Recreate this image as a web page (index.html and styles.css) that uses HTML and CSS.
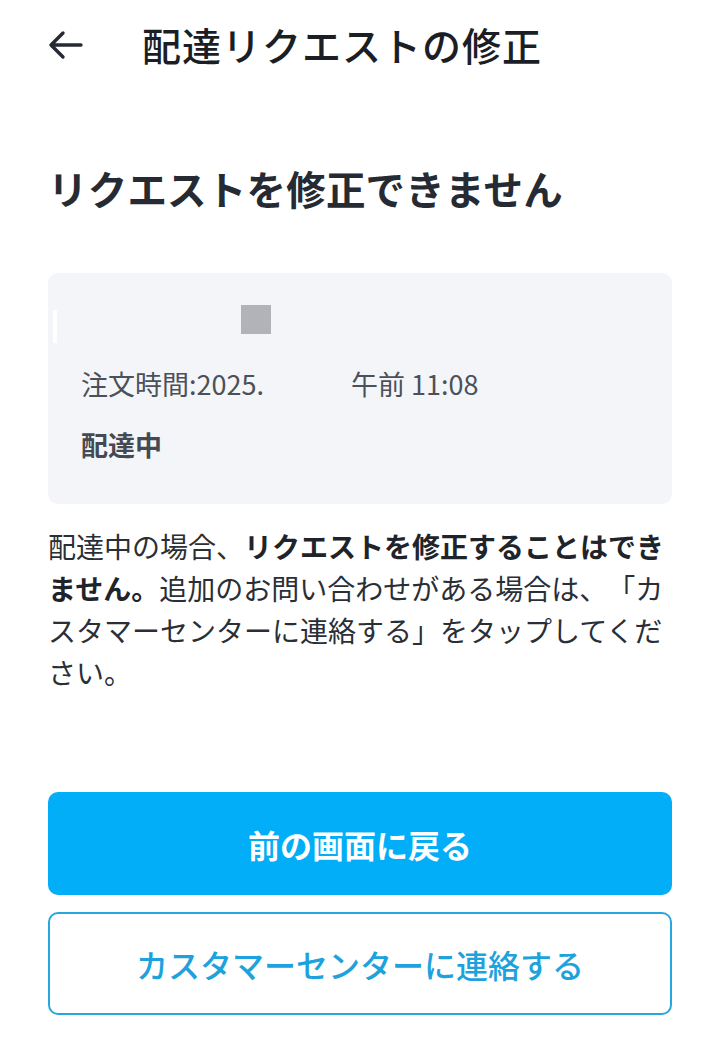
FILE: index.html
```html
<!DOCTYPE html>
<html lang="ja">

<head>
  <meta charset="UTF-8">
  <meta name="viewport" content="width=device-width, initial-scale=1.0">
  <title>配達リクエストの修正</title>
  <link rel="stylesheet" href="styles.css">
</head>

<body>
  <div id="page">
    <div class="top-bar">
      <div class="back">
        <svg width="36" height="30" viewBox="0 0 36 30">
          <path d="M4 15 H33 M15 3 L3 15 L15 27" fill="none" stroke="#262b33" stroke-width="3.4"
            stroke-linecap="round" stroke-linejoin="round" />
        </svg>
      </div>
      <h1 class="top-title">配達リクエストの修正</h1>
    </div>

    <h2 class="heading">リクエストを修正できません</h2>

    <div class="order-card">
      <div class="shop-row">
        <span class="blur-line"></span>
        <span class="thumb"></span>
      </div>
      <p class="order-time">注文時間:2025.<span class="hidden-date"></span>午前 11:08</p>
      <p class="order-status">配達中</p>
    </div>

    <p class="notice">配達中の場合、<b>リクエストを修正することはできません。</b>追加のお問い合わせがある場合は、「カスタマーセンターに連絡する」をタップしてください。</p>

    <div class="actions">
      <div class="btn btn-primary">前の画面に戻る</div>
      <div class="btn btn-outline">カスタマーセンターに連絡する</div>
    </div>
  </div>
</body>

</html>
```

FILE: styles.css
```css
* {
  margin: 0;
  padding: 0;
  box-sizing: border-box;
}

body {
  background: #ffffff;
  font-family: "Noto Sans CJK JP", "Noto Sans", sans-serif;
  color: #262b33;
}

#page {
  width: 720px;
  height: 1056px;
  padding: 0 48px;
}

.top-bar {
  display: flex;
  align-items: center;
  height: 88px;
}

.back {
  width: 94px;
  display: flex;
  align-items: center;
  padding-top: 2px;
}

.top-title {
  font-size: 39px;
  font-weight: 500;
  color: #1b1f25;
  letter-spacing: 1px;
}

.heading {
  margin-top: 74px;
  font-size: 39.5px;
  font-weight: 700;
  line-height: 1.3;
  color: #262b33;
  letter-spacing: 0.2px;
}

.order-card {
  margin-top: 60px;
  background: #f3f5f8;
  border-radius: 10px;
  padding: 32px 33px 42px 33px;
}

.shop-row {
  position: relative;
  height: 38px;
}

.blur-line {
  position: absolute;
  left: -28px;
  top: 5px;
  width: 4px;
  height: 33px;
  background: #ffffff;
}

.thumb {
  position: absolute;
  left: 160px;
  top: 0;
  width: 30px;
  height: 29px;
  background: #b1b3b8;
}

.order-time {
  margin-top: 24px;
  font-size: 27px;
  line-height: 34px;
  color: #4b5059;
}

.hidden-date {
  display: inline-block;
  width: 87px;
}

.order-status {
  margin-top: 27px;
  font-size: 27px;
  line-height: 34px;
  font-weight: 700;
  color: #454a52;
}

.notice {
  margin-top: 21px;
  font-size: 28px;
  line-height: 42px;
  color: #2a2f36;
  text-spacing-trim: space-all;
}

.notice b {
  font-weight: 700;
  color: #1f242b;
}

.actions {
  margin-top: 99px;
  display: flex;
  flex-direction: column;
  gap: 17px;
}

.btn {
  height: 103px;
  border-radius: 10px;
  display: flex;
  align-items: center;
  justify-content: center;
  font-size: 32px;
  font-weight: 700;
}

.btn-primary {
  background: #03aef8;
  color: #ffffff;
}

.btn-outline {
  background: #ffffff;
  border: 2px solid #2aa6de;
  color: #1ea2de;
  font-weight: 500;
}
```
